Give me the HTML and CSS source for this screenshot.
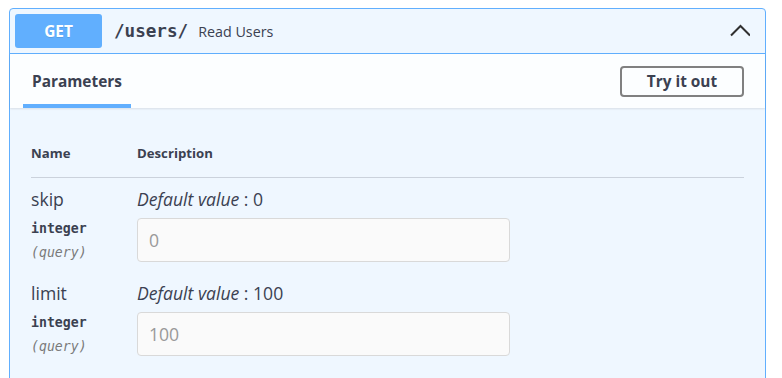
FILE: index.html
```html
<!DOCTYPE html>
<html>
<head>
<meta charset="utf-8">
<link rel="stylesheet" href="styles.css">
</head>
<body>
<div class="opblock">
  <div class="summary">
    <span class="method">GET</span>
    <span class="path">/users/</span>
    <span class="summary-desc">Read Users</span>
    <svg class="arrow" width="20" height="20" viewBox="0 0 20 20" aria-hidden="true">
      <polyline points="1,14.5 10.5,5 20,14.5" fill="none" stroke="#303030" stroke-width="2"/>
    </svg>
  </div>
  <div class="section-header">
    <div class="tabs">
      <div class="tab">Parameters</div>
    </div>
    <button class="try-out">Try it out</button>
  </div>
  <div class="table-container">
    <div class="params-head">
      <div class="col-name">Name</div>
      <div class="col-desc">Description</div>
    </div>
    <div class="param-row">
      <div class="col-name">
        <div class="param-name">skip</div>
        <div class="param-type">integer</div>
        <div class="param-in">(query)</div>
      </div>
      <div class="col-desc">
        <div class="default"><i>Default value</i> : 0</div>
        <input class="param-input" type="text" placeholder="0">
      </div>
    </div>
    <div class="param-row">
      <div class="col-name">
        <div class="param-name">limit</div>
        <div class="param-type">integer</div>
        <div class="param-in">(query)</div>
      </div>
      <div class="col-desc">
        <div class="default"><i>Default value</i> : 100</div>
        <input class="param-input" type="text" placeholder="100">
      </div>
    </div>
  </div>
</div>
</body>
</html>
```

FILE: styles.css
```css
html, body {
  margin: 0;
  padding: 0;
  background: #ffffff;
}
body {
  padding: 8px 16px 0 9px;
  font-family: "Open Sans", sans-serif;
  color: #3b4151;
}
.opblock {
  width: 757px;
  box-sizing: border-box;
  border: 1px solid #61affe;
  border-radius: 4px;
  background: #eff7ff;
  height: 400px;
}
.summary {
  display: flex;
  align-items: center;
  height: 44px;
  padding: 0 5px;
  border-bottom: 1px solid #61affe;
}
.method {
  width: 87px;
  height: 34px;
  border-radius: 3px;
  background: #61affe;
  color: #fff;
  font-weight: 700;
  font-size: 15.4px;
  display: flex;
  align-items: center;
  justify-content: center;
  text-shadow: 0 1px 0 rgba(0,0,0,.1);
}
.path {
  margin-left: 12px;
  font-family: "DejaVu Sans Mono", monospace;
  font-weight: 700;
  font-size: 17.6px;
  color: #3b4151;
}
.summary-desc {
  margin-left: 10px;
  font-size: 14.3px;
  color: #3b4151;
}
.arrow {
  margin-left: auto;
  margin-right: 10px;
}
.section-header {
  display: flex;
  align-items: center;
  justify-content: space-between;
  height: 54px;
  background: rgba(255,255,255,.8);
  box-shadow: 0 1px 2px rgba(0,0,0,.1);
  position: relative;
}
.tabs {
  align-self: stretch;
  display: flex;
  padding-left: 13px;
}
.tab {
  padding: 4px 9px 0;
  display: flex;
  align-items: center;
  font-weight: 700;
  font-size: 15.4px;
  border-bottom: 4px solid #61affe;
  box-sizing: border-box;
}
.try-out {
  margin-right: 21px;
  width: 124px;
  height: 31px;
  border: 2px solid #808080;
  border-radius: 4px;
  background: transparent;
  font-family: "Open Sans", sans-serif;
  font-weight: 700;
  font-size: 15.4px;
  color: #3b4151;
  padding: 0;
}
.table-container {
  padding: 20px 21px 0 21px;
}
.params-head {
  display: grid;
  grid-template-columns: 106px 1fr;
  padding: 16px 0 15px;
  line-height: 18px;
  font-size: 13.2px;
  font-weight: 700;
  border-bottom: 1px solid rgba(59,65,81,.2);
}
.param-row {
  display: grid;
  grid-template-columns: 106px 1fr;
  padding: 9px 0 10px;
}
.param-name {
  font-size: 17.6px;
  line-height: 24px;
}
.param-type {
  margin-top: 6px;
  font-family: "DejaVu Sans Mono", monospace;
  font-weight: 700;
  font-size: 13.2px;
  line-height: 24px;
}
.param-in {
  margin-bottom: -3px;
  font-family: "DejaVu Sans Mono", monospace;
  font-style: italic;
  font-size: 13.2px;
  line-height: 24px;
  color: #7a7a7a;
}
.default {
  font-size: 17.6px;
  line-height: 24px;
}
.param-input {
  display: block;
  margin-top: 7px;
  width: 373px;
  height: 44px;
  box-sizing: border-box;
  border: 1px solid #d9d9d9;
  border-radius: 4px;
  background: #fafafa;
  padding: 0 11px;
  font-family: "Open Sans", sans-serif;
  font-size: 17.6px;
  color: #3b4151;
  outline: none;
}
.param-input::placeholder {
  color: #999999;
}
```
